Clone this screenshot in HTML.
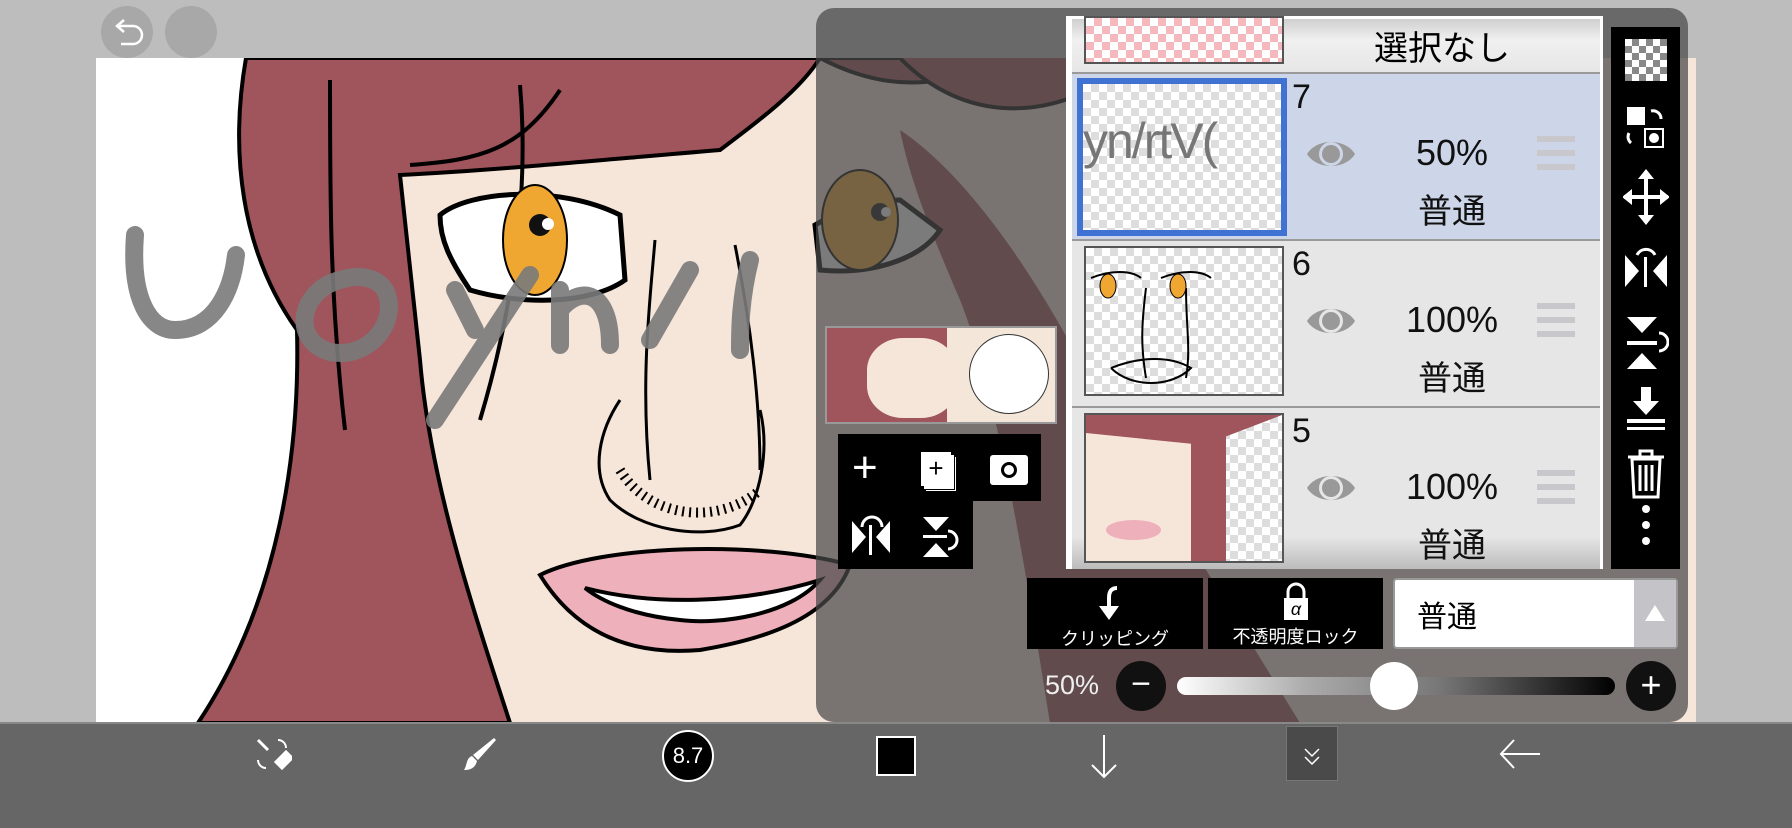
<!DOCTYPE html>
<html><head><meta charset="utf-8"><style>
*{margin:0;padding:0;box-sizing:border-box}
body{width:1792px;height:828px;overflow:hidden;background:#bdbdbd;position:relative;font-family:"Liberation Sans","Noto Sans CJK JP",sans-serif}
.abs{position:absolute}
.circ{position:absolute;width:52px;height:52px;border-radius:50%;background:#a8a8a8}
#panel{left:816px;top:8px;width:872px;height:714px;border-radius:18px;background:rgba(72,72,72,0.72)}
#list{left:1066px;top:16px;width:537px;height:553px;background:#fff;border:3px solid #fff}
.row{position:absolute;left:3px;width:528px;background:#e6e6e6;border-bottom:2px solid #9a9a9a}
.thumb{position:absolute;left:12px;width:200px;height:150px;border:2px solid #555;background-color:#fff;
background-image:linear-gradient(45deg,#ddd 25%,transparent 25%,transparent 75%,#ddd 75%),linear-gradient(45deg,#ddd 25%,transparent 25%,transparent 75%,#ddd 75%);background-size:16px 16px;background-position:0 0,8px 8px}
.num{position:absolute;left:220px;font-size:34px;color:#111}
.pct{position:absolute;left:290px;width:180px;text-align:center;font-size:36px;color:#111}
.mode{position:absolute;left:290px;width:180px;text-align:center;font-size:34px;color:#111}
.eye{position:absolute;left:233px;width:52px;height:36px}
.ham{position:absolute;left:465px;width:38px}
.ham i{display:block;height:6px;background:#c8c8cc;margin-bottom:8px}
#tools{left:1611px;top:27px;width:69px;height:542px;background:#000}
.btn{background:#000;color:#fff;font-size:18px;text-align:center}
</style></head><body>
<div class="circ" style="left:101px;top:6px"></div>
<div class="circ" style="left:165px;top:6px"></div>
<svg class="abs" style="left:101px;top:6px" width="52" height="52"><path d="M18 20h14a9 9 0 0 1 0 18H20" fill="none" stroke="#fff" stroke-width="2.5"/><path d="M23 14l-7 6 7 6" fill="none" stroke="#fff" stroke-width="2.5"/></svg>

<svg class="abs" style="left:96px;top:58px" width="1600" height="665" viewBox="96 58 1600 665">
<rect x="96" y="58" width="1600" height="665" fill="#fff"/>
<path d="M300 58 H1696 V723 H480 C450 600 420 450 410 300 L400 160 C380 120 330 90 300 58Z" fill="#f6e5d9"/>
<path d="M246 58 C230 150 240 250 297 330 C300 450 280 600 198 723 H510 C470 600 430 480 420 360 L400 175 C500 170 600 160 720 150 C760 120 800 90 820 58Z" fill="#a0545b" stroke="#000" stroke-width="4"/>
<path d="M820 58 C900 100 960 80 1000 58Z" fill="#a0545b" stroke="#000" stroke-width="4"/>
<path d="M900 58 C960 120 1050 130 1140 58" fill="#a0545b" stroke="#000" stroke-width="4"/>
<path d="M900 130 C960 170 1030 260 1100 400 L1200 560 L1300 723 H1050 C1030 600 1000 400 960 300 C930 230 910 180 900 130Z" fill="#a0545b"/>
<path d="M330 80 C330 200 330 300 345 430 M520 85 C530 200 510 320 480 420 M560 90 C520 150 480 160 410 165" stroke="#000" stroke-width="4" fill="none"/>
<path d="M440 215 C470 190 560 185 620 215 L625 280 C590 305 520 305 470 290 C450 260 440 240 440 215Z" fill="#fff" stroke="#000" stroke-width="5"/>
<ellipse cx="535" cy="240" rx="32" ry="55" fill="#f0a732" stroke="#000" stroke-width="2"/>
<circle cx="540" cy="225" r="11" fill="#111"/><circle cx="548" cy="224" r="6" fill="#fff"/>
<path d="M900 200 C870 200 840 210 815 225 L820 270 C870 275 920 260 940 230Z" fill="#fff" stroke="#000" stroke-width="5"/>
<ellipse cx="860" cy="220" rx="38" ry="50" fill="#f0a732" stroke="#000" stroke-width="2"/>
<circle cx="880" cy="212" r="9" fill="#111"/><circle cx="886" cy="212" r="5" fill="#fff"/>
<path d="M655 240 C650 300 640 380 650 480 M735 245 C750 320 760 400 760 470 M620 400 C600 430 590 470 610 500 C640 530 700 540 740 525 C760 500 770 450 760 410" stroke="#000" stroke-width="3" fill="none"/>
<path d="M620 470 C650 520 720 525 760 490" stroke="#000" stroke-width="10" stroke-dasharray="2 5" fill="none"/>
<path d="M540 575 C600 545 760 540 850 565 C830 620 760 640 700 650 C640 655 580 640 540 575Z" fill="#eeb0bb" stroke="#000" stroke-width="4"/>
<path d="M585 588 C650 605 740 605 820 580 C790 615 720 625 680 620 C630 615 600 600 585 588Z" fill="#fff" stroke="#000" stroke-width="4"/>
<g fill="none" stroke="#7a7a7a" stroke-width="18" stroke-linecap="round" opacity=".9">
<path d="M135 235 C130 300 150 330 175 330 C215 330 232 290 236 255"/>
<path d="M340 280 C300 290 290 340 330 352 C370 360 400 320 385 290 C375 275 355 275 340 280"/>
<path d="M455 290 L475 330 M530 275 L435 420"/>
<path d="M560 290 L560 345 M560 310 C580 285 610 290 610 345"/>
<path d="M690 270 L650 340 M750 260 C740 300 740 330 740 350"/>
</g>
</svg>

<div id="panel" class="abs"></div>
<div class="abs" style="left:825px;top:326px;width:232px;height:98px;background:#f5e6da;border:2px solid #999">
<div class="abs" style="left:0;top:0;width:120px;height:94px;background:#a0545b"></div>
<div class="abs" style="left:40px;top:10px;width:90px;height:80px;background:#f6e5d9;border-radius:40%"></div>
<div class="abs" style="right:6px;top:6px;width:80px;height:80px;background:#fff;border-radius:50%;border:1px solid #333"></div>
</div>
<div class="abs" style="left:838px;top:434px;width:203px;height:67px;background:#000"></div>
<div class="abs" style="left:838px;top:501px;width:135px;height:68px;background:#000"></div>
<div class="abs" style="left:852px;top:448px;color:#fff;font-size:44px;line-height:40px">+</div>
<div class="abs" style="left:921px;top:452px;width:30px;height:34px;background:#fff;color:#000;font-size:26px;text-align:center;line-height:32px;box-shadow:3px 3px 0 #fff,4px 4px 0 #000,5px 5px 0 #fff">+</div>
<div class="abs" style="left:990px;top:455px;width:38px;height:30px;background:#fff;border-radius:3px"><div style="width:16px;height:16px;border:3px solid #000;border-radius:50%;margin:7px auto"></div></div>
<svg class="abs" style="left:850px;top:515px" width="130" height="44"><g fill="#fff"><path d="M2 6l14 16L2 38Z M40 6L26 22 40 38Z"/><rect x="19" y="10" width="3" height="30"/><path d="M12 12a10 10 0 0 1 20 0" fill="none" stroke="#fff" stroke-width="3"/><path d="M73 2h26L86 16Z M73 42h26L86 28Z"/><rect x="73" y="20" width="24" height="3"/><path d="M98 16a9 9 0 0 1 0 18" fill="none" stroke="#fff" stroke-width="3"/></g></svg>

<div id="list" class="abs">
<div class="row" style="top:0;height:55px;background:linear-gradient(#cfcfcf,#f0f0f0 40%,#e6e6e6)">
<div class="abs" style="left:12px;top:-3px;width:200px;height:48px;border:2px solid #555;background-color:#fff;background-image:linear-gradient(45deg,#f5b8bc 25%,transparent 25%,transparent 75%,#f5b8bc 75%),linear-gradient(45deg,#f5b8bc 25%,transparent 25%,transparent 75%,#f5b8bc 75%);background-size:16px 16px;background-position:0 0,8px 8px"></div>
<div class="abs" style="left:260px;top:2px;width:220px;text-align:center;font-size:34px">選択なし</div></div>
<div class="row" style="top:55px;height:167px;background:#cdd6e9">
<div class="thumb" style="left:5px;top:4px;width:210px;height:158px;border:6px solid #3f72d3"><div style="font-size:50px;color:#777;margin-top:28px;white-space:nowrap;overflow:hidden;letter-spacing:-2px">yn/rtV(</div></div>
<div class="num" style="top:4px">7</div>
<svg class="eye" style="top:62px" viewBox="0 0 52 36"><path d="M2 18C12 2 40 2 50 18 40 34 12 34 2 18Z" fill="#999"/><circle cx="26" cy="18" r="12" fill="#cdd6e9"/><circle cx="26" cy="18" r="9" fill="#999"/></svg>
<div class="pct" style="top:58px">50%</div><div class="mode" style="top:110px">普通</div>
<div class="ham" style="top:62px"><i></i><i></i><i></i></div></div>
<div class="row" style="top:222px;height:167px">
<div class="thumb" style="top:5px"><svg width="196" height="146"><g fill="none" stroke="#000" stroke-width="2"><path d="M5 30c20-8 40-8 50 0M75 30c20-8 40-8 50 0M60 40c-5 40-5 60 0 90M100 40c0 40 5 60 0 90M25 120c30-12 60-12 80 0c-20 20-60 20-80 0"/></g><ellipse cx="22" cy="38" rx="8" ry="12" fill="#f0a732" stroke="#000"/><ellipse cx="92" cy="38" rx="8" ry="12" fill="#f0a732" stroke="#000"/></svg></div>
<div class="num" style="top:4px">6</div>
<svg class="eye" style="top:62px" viewBox="0 0 52 36"><path d="M2 18C12 2 40 2 50 18 40 34 12 34 2 18Z" fill="#999"/><circle cx="26" cy="18" r="12" fill="#e6e6e6"/><circle cx="26" cy="18" r="9" fill="#999"/></svg>
<div class="pct" style="top:58px">100%</div><div class="mode" style="top:110px">普通</div>
<div class="ham" style="top:62px"><i></i><i></i><i></i></div></div>
<div class="row" style="top:389px;height:161px;border:none;background:linear-gradient(#e6e6e6 80%,#bbb)">
<div class="thumb" style="top:5px"><div class="abs" style="left:0;top:0;width:140px;height:146px;background:#f6e5d9"></div><div class="abs" style="left:0;top:0;width:196px;height:30px;background:#a0545b;clip-path:polygon(0 0,100% 0,60% 100%,0 60%)"></div><div class="abs" style="left:105px;top:0;width:35px;height:146px;background:#a0545b"></div><div class="abs" style="left:20px;top:105px;width:55px;height:20px;background:#eeb0bb;border-radius:50%"></div></div>
<div class="num" style="top:4px">5</div>
<svg class="eye" style="top:62px" viewBox="0 0 52 36"><path d="M2 18C12 2 40 2 50 18 40 34 12 34 2 18Z" fill="#999"/><circle cx="26" cy="18" r="12" fill="#e6e6e6"/><circle cx="26" cy="18" r="9" fill="#999"/></svg>
<div class="pct" style="top:58px">100%</div><div class="mode" style="top:110px">普通</div>
<div class="ham" style="top:62px"><i></i><i></i><i></i></div></div>
</div>

<div id="tools" class="abs">
<div class="abs" style="left:14px;top:12px;width:42px;height:42px;background-color:#fff;background-image:linear-gradient(45deg,#888 25%,transparent 25%,transparent 75%,#888 75%),linear-gradient(45deg,#888 25%,transparent 25%,transparent 75%,#888 75%);background-size:14px 14px;background-position:0 0,7px 7px"></div>
<svg class="abs" style="left:12px;top:78px" width="46" height="440" fill="#fff" stroke="#fff">
<rect x="4" y="2" width="18" height="18" stroke="none"/><rect x="22" y="24" width="18" height="18" fill="none" stroke-width="2"/><circle cx="31" cy="33" r="5" stroke="none"/><path d="M28 6a8 8 0 0 1 10 8M8 38a8 8 0 0 1-2-10" fill="none" stroke-width="3"/>
<path d="M23 70v44M1 92h44" stroke-width="4"/><path d="M23 64l-8 10h16ZM23 120l-8-10h16ZM-1 92l10-8v16ZM47 92l-10-8v16Z" stroke="none"/>
<path d="M2 150l14 16L2 182Z M44 150L30 166 44 182Z" stroke="none"/><rect x="21" y="152" width="3" height="30" stroke="none"/><path d="M14 150a10 10 0 0 1 18 0" fill="none" stroke-width="3"/>
<path d="M4 212h30L19 228Z M4 264h30L19 248Z" stroke="none"/><rect x="4" y="236" width="30" height="4" stroke="none"/><path d="M36 228a9 9 0 0 1 0 18" fill="none" stroke-width="3"/>
<path d="M18 282h10v14h8L23 310 10 296h8Z" stroke="none"/><rect x="4" y="314" width="38" height="4" stroke="none"/><rect x="4" y="322" width="38" height="3" stroke="none"/>
<path d="M9 354h28l-2 38H11Z" fill="none" stroke-width="3"/><path d="M5 352h36M17 352v-6h12v6M17 360v26M23 360v26M29 360v26" fill="none" stroke-width="3"/>
<circle cx="23" cy="404" r="4" stroke="none"/><circle cx="23" cy="420" r="4" stroke="none"/><circle cx="23" cy="436" r="4" stroke="none"/>
</svg></div>

<div class="abs btn" style="left:1027px;top:578px;width:176px;height:71px">
<svg width="40" height="40" style="margin-top:6px"><path d="M22 4c-6 0-8 4-8 10v10" fill="none" stroke="#fff" stroke-width="4"/><path d="M4 22h20L14 36Z" fill="#fff"/></svg><div style="margin-top:-4px">クリッピング</div></div>
<div class="abs btn" style="left:1208px;top:578px;width:175px;height:71px">
<svg width="40" height="40" style="margin-top:4px"><path d="M12 16v-6a8 8 0 0 1 16 0v6" fill="none" stroke="#fff" stroke-width="3"/><rect x="8" y="16" width="24" height="22" fill="#fff"/><text x="20" y="33" font-size="18" text-anchor="middle" fill="#000" font-style="italic">α</text></svg><div style="margin-top:-4px">不透明度ロック</div></div>
<div class="abs" style="left:1393px;top:578px;width:285px;height:71px;background:#fff;border:2px solid #999;border-radius:4px">
<div class="abs" style="left:22px;top:12px;font-size:30px">普通</div>
<div class="abs" style="right:0;top:0;width:42px;height:67px;background:#c4c4c8"><div style="margin:25px auto;width:0;height:0;border-left:10px solid transparent;border-right:10px solid transparent;border-bottom:16px solid #fff"></div></div></div>

<div class="abs" style="left:1045px;top:670px;color:#eee;font-size:27px">50%</div>
<div class="abs" style="left:1116px;top:661px;width:50px;height:50px;border-radius:50%;background:#111;color:#fff;font-size:34px;text-align:center;line-height:46px">−</div>
<div class="abs" style="left:1177px;top:677px;width:438px;height:18px;border-radius:9px;background:linear-gradient(90deg,#fff,#aaa 30%,#777 60%,#000)"></div>
<div class="abs" style="left:1370px;top:662px;width:48px;height:48px;border-radius:50%;background:#fff"></div>
<div class="abs" style="left:1626px;top:661px;width:50px;height:50px;border-radius:50%;background:#111;color:#fff;font-size:36px;text-align:center;line-height:48px">+</div>

<div class="abs" style="left:0;top:722px;width:1792px;height:106px;background:#666;border-top:2px solid #888"></div>
<svg class="abs" style="left:252px;top:734px" width="40" height="40"><path d="M6 6l10 10M24 28l10-10 6 6-10 10Z" stroke="#fff" stroke-width="3" fill="#fff"/><path d="M26 6a8 8 0 0 1 8 8M6 26a8 8 0 0 0 8 8" stroke="#fff" fill="none" stroke-width="2"/></svg>
<svg class="abs" style="left:460px;top:734px" width="40" height="40"><path d="M34 4l2 2-18 20-5-5Z" fill="#fff"/><path d="M12 22l5 5c-2 8-8 9-13 9 3-4 2-12 8-14Z" fill="#fff"/></svg>
<div class="abs" style="left:662px;top:730px;width:52px;height:52px;border-radius:50%;background:#000;border:2px solid #fff;color:#fff;font-size:22px;text-align:center;line-height:48px">8.7</div>
<div class="abs" style="left:876px;top:736px;width:40px;height:40px;background:#000;border:2px solid #fff"></div>
<svg class="abs" style="left:1086px;top:733px" width="36" height="48"><path d="M18 2v42M6 32l12 12 12-12" stroke="#fff" stroke-width="2" fill="none"/></svg>
<div class="abs" style="left:1286px;top:726px;width:52px;height:55px;background:#4a4a4a;border:1px solid #777"></div>
<svg class="abs" style="left:1300px;top:745px" width="24" height="24"><path d="M5 4l7 7 7-7M5 12l7 7 7-7" stroke="#fff" stroke-width="1.5" fill="none"/></svg>
<svg class="abs" style="left:1498px;top:734px" width="44" height="40"><path d="M42 20H4M16 6L3 20l13 14" stroke="#fff" stroke-width="2" fill="none"/></svg>
</body></html>
